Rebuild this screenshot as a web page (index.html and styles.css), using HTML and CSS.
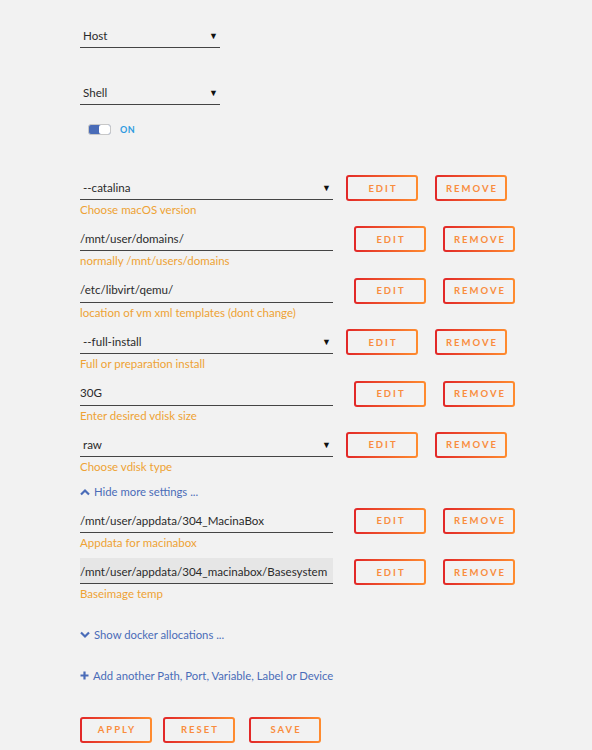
FILE: index.html
```html
<!DOCTYPE html>
<html>
<head>
<meta charset="utf-8">
<link rel="stylesheet" href="styles.css">
</head>
<body>
<div class="page">
  <div class="field select small first"><span>Host</span><span class="arrow">▼</span></div>
  <div class="field select small second"><span>Shell</span><span class="arrow">▼</span></div>
  <div class="toggle-row"><span class="toggle"><span class="knob"></span></span><span class="on">ON</span></div>

  <div class="rows">
    <div class="row sel">
      <div class="line"><div class="field select wide"><span>--catalina</span><span class="arrow">▼</span></div><button class="btn edit">EDIT</button><button class="btn remove">REMOVE</button></div>
      <div class="caption">Choose macOS version</div>
    </div>
    <div class="row inp">
      <div class="line"><div class="field input wide"><span>/mnt/user/domains/</span></div><button class="btn edit">EDIT</button><button class="btn remove">REMOVE</button></div>
      <div class="caption">normally /mnt/users/domains</div>
    </div>
    <div class="row inp">
      <div class="line"><div class="field input wide"><span>/etc/libvirt/qemu/</span></div><button class="btn edit">EDIT</button><button class="btn remove">REMOVE</button></div>
      <div class="caption">location of vm xml templates (dont change)</div>
    </div>
    <div class="row sel">
      <div class="line"><div class="field select wide"><span>--full-install</span><span class="arrow">▼</span></div><button class="btn edit">EDIT</button><button class="btn remove">REMOVE</button></div>
      <div class="caption">Full or preparation install</div>
    </div>
    <div class="row inp">
      <div class="line"><div class="field input wide"><span>30G</span></div><button class="btn edit">EDIT</button><button class="btn remove">REMOVE</button></div>
      <div class="caption">Enter desired vdisk size</div>
    </div>
    <div class="row sel">
      <div class="line"><div class="field select wide"><span>raw</span><span class="arrow">▼</span></div><button class="btn edit">EDIT</button><button class="btn remove">REMOVE</button></div>
      <div class="caption">Choose vdisk type</div>
    </div>
  </div>

  <div class="link hide"><svg class="ico" viewBox="0 0 10 8" width="10" height="8"><path d="M1 6.5 L5 2.5 L9 6.5" fill="none" stroke="#4a6cb8" stroke-width="2.2"/></svg>Hide more settings ...</div>

  <div class="rows2">
    <div class="row inp">
      <div class="line"><div class="field input wide"><span>/mnt/user/appdata/304_MacinaBox</span></div><button class="btn edit">EDIT</button><button class="btn remove">REMOVE</button></div>
      <div class="caption">Appdata for macinabox</div>
    </div>
    <div class="row inp">
      <div class="line"><div class="field input wide grey"><span>/mnt/user/appdata/304_macinabox/Basesystem</span></div><button class="btn edit">EDIT</button><button class="btn remove">REMOVE</button></div>
      <div class="caption">Baseimage temp</div>
    </div>
  </div>

  <div class="link show"><svg class="ico" viewBox="0 0 10 8" width="10" height="8"><path d="M1 1.5 L5 5.5 L9 1.5" fill="none" stroke="#4a6cb8" stroke-width="2.2"/></svg>Show docker allocations ...</div>

  <div class="link add"><svg class="ico plus" viewBox="0 0 9 9" width="9" height="9"><path d="M4.5 0.5 V8.5 M0.5 4.5 H8.5" fill="none" stroke="#4a6cb8" stroke-width="2.2"/></svg>Add another Path, Port, Variable, Label or Device</div>

  <div class="actions"><button class="btn apply">APPLY</button><button class="btn reset">RESET</button><button class="btn save">SAVE</button></div>
</div>
</body>
</html>
```

FILE: styles.css
```css
html, body {
  margin: 0;
  padding: 0;
  background: #f2f2f2;
}
body {
  font-family: Lato, "Open Sans", sans-serif;
  font-size: 11.6px;
  color: #2b2b2b;
}
.page {
  padding: 22px 0 0 80px;
  width: 512px;
  height: 728px;
  overflow: hidden;
}
.field {
  box-sizing: border-box;
  height: 26px;
  padding-top: 2px;
  border-bottom: 1px solid #444;
  display: flex;
  align-items: center;
  justify-content: space-between;
  line-height: 1;
  white-space: nowrap;
}
.field.select span:first-child { padding-left: 3px; }
.arrow {
  font-size: 9px;
  color: #111;
  padding-right: 2px;
}
.small { width: 140px; }
.second { margin-top: 31px; }
.wide { width: 253px; }
.grey { background: #e6e6e6; }
.toggle-row {
  display: flex;
  align-items: center;
  margin: 18px 0 0 8px;
  height: 12px;
}
.toggle {
  box-sizing: border-box;
  width: 23px;
  height: 11px;
  border: 1px solid #c8c8c8;
  border-radius: 3px;
  background: #4a6cb8;
  display: flex;
  justify-content: flex-end;
}
.knob {
  width: 11px;
  height: 9px;
  background: #fff;
  border-radius: 2px;
}
.on {
  margin-left: 9px;
  font-size: 9px;
  font-weight: 700;
  color: #2e9be0;
  letter-spacing: 0.5px;
}
.rows { margin-top: 39px; }
.rows2 { margin-top: 8px; }
.row { height: 51.4px; }
.line {
  display: flex;
  align-items: flex-start;
}
.btn {
  box-sizing: border-box;
  width: 72px;
  height: 26px;
  padding: 0;
  border: 2px solid transparent;
  border-radius: 3px;
  background: linear-gradient(#f2f2f2, #f2f2f2) padding-box,
              linear-gradient(90deg, #e22828, #ff8c2f) border-box;
  color: #f98d3e;
  font-family: Lato, "Open Sans", sans-serif;
  font-size: 9.5px;
  font-weight: 700;
  letter-spacing: 2px;
  text-indent: 2px;
  cursor: pointer;
}
.line .btn { margin-top: 1px; }
.sel .edit { margin-left: 13px; }
.inp .edit { margin-left: 21px; }
.remove { margin-left: 17px; }
.caption {
  color: #eea234;
  font-size: 11.5px;
  margin-top: 2px;
  line-height: 14px;
}
.link {
  color: #4a6cb8;
  font-size: 11.3px;
  display: flex;
  align-items: center;
  height: 14px;
  white-space: nowrap;
}
.ico { margin-right: 4px; }
.hide { margin-top: 2.6px; }
.show { margin-top: 18px; }
.add { margin-top: 27px; }
.actions {
  display: flex;
  margin-top: 34px;
}
.apply { margin-right: 11px; }
.reset { margin-right: 14px; }
```
